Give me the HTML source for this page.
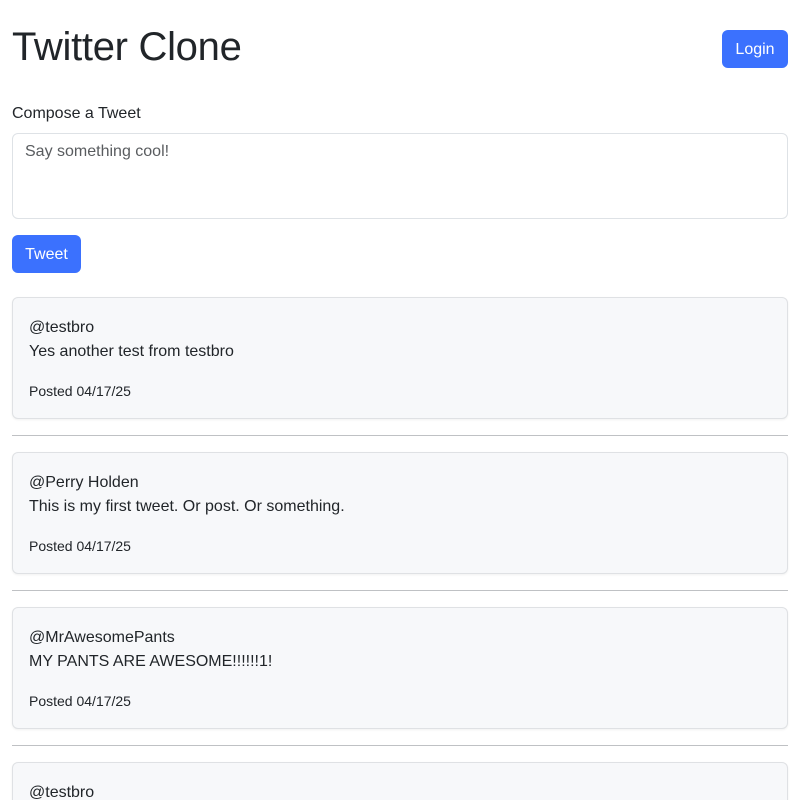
<!DOCTYPE html>
<html><head><meta charset="utf-8"><style>
*{box-sizing:border-box;margin:0;padding:0}
html,body{width:801px;height:800px;overflow:hidden}
body{background:#fff;font-family:"Liberation Sans",Helvetica,Arial,sans-serif;color:#212529;font-size:16px;line-height:1.5;position:relative}
h1{position:absolute;left:12px;top:23px;font-size:40px;font-weight:500;line-height:48px;letter-spacing:-0.3px}
.btn{position:absolute;background:#3b71fe;color:#fff;border-radius:6px;font-size:16px;text-align:center;line-height:40px;height:38px}
.label{position:absolute;left:12px;top:102px;font-size:16px}
.ta{position:absolute;left:12px;top:133px;width:776px;height:86px;border:1px solid #dee2e6;border-radius:6px;padding:6px 12px;color:#595c5f}
.card{position:absolute;left:12px;width:776px;height:122px;background:#f7f8fa;border:1px solid #dfe1e4;border-radius:6px;padding:16px;box-shadow:0 1px 2px rgba(0,0,0,.06)}
.card .u{line-height:24px;margin-top:2px}
.card .p{font-size:14px;margin-top:17px;line-height:20px}
hr{position:absolute;left:12px;width:776px;border:0;border-top:1px solid #bfc1c4}
</style></head><body>
<h1>Twitter Clone</h1>
<div class="btn" style="left:722px;top:30px;width:66px">Login</div>
<div class="label">Compose a Tweet</div>
<div class="ta">Say something cool!</div>
<div class="btn" style="left:12px;top:235px;width:69px">Tweet</div>
<div class="card" style="top:297px"><div class="u">@testbro</div><div>Yes another test from testbro</div><div class="p">Posted 04/17/25</div></div>
<hr style="top:435px">
<div class="card" style="top:452px"><div class="u">@Perry Holden</div><div>This is my first tweet. Or post. Or something.</div><div class="p">Posted 04/17/25</div></div>
<hr style="top:590px">
<div class="card" style="top:607px"><div class="u">@MrAwesomePants</div><div>MY PANTS ARE AWESOME!!!!!!1!</div><div class="p">Posted 04/17/25</div></div>
<hr style="top:745px">
<div class="card" style="top:762px"><div class="u">@testbro</div></div>
</body></html>
